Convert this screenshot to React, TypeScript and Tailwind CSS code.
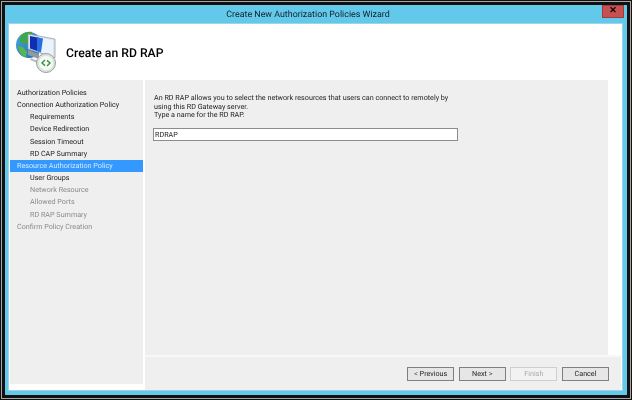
function Icon() {
  return (
    <svg width="42" height="42" viewBox="0 0 42 42" className="shrink-0">
      <defs>
        <linearGradient id="glb" x1="0" y1="0" x2="1" y2="1">
          <stop offset="0" stopColor="#4aa8de" />
          <stop offset="1" stopColor="#1769ad" />
        </linearGradient>
      </defs>
      <circle cx="13" cy="14" r="13" fill="url(#glb)" />
      <path d="M5 4c3-3 8-4 11-3l1 4-4 3-2 5-5-1-3-3z" fill="#3fa64a" />
      <path d="M2 15l5 1 4 5-1 5c-5-1-7-5-8-11z" fill="#5ab54c" />
      <path d="M12 3l27 5 0 19-27-9z" fill="#dfe4ea" stroke="#8b97a8" strokeWidth="0.7" />
      <path d="M14 5l23 4.2 0 16-23-8z" fill="#eaf3fb" />
      <path d="M14 5l9 1.7 0 14-9-3.2z" fill="#0f2fb0" />
      <path d="M21 6.3l6 1.2-2 14-4-1.4z" fill="#2a6fe0" />
      <path d="M12 19l11 4 0 5-11-4z" fill="#8f98a3" />
      <path d="M15 27l7 3-1 2-7-3z" fill="#b9bfc6" />
      <circle cx="30" cy="32" r="9.5" fill="#dfe3df" stroke="#98a29c" strokeWidth="1" />
      <circle cx="30" cy="32" r="7" fill="#f8f9f6" />
      <path d="M29 29l-3 3 3 2.6" fill="none" stroke="#2f9a3c" strokeWidth="1.4" />
      <path d="M31 29.4l3 2.6-3 3" fill="none" stroke="#2f9a3c" strokeWidth="1.4" />
    </svg>
  );
}

const rows: { label: string; indent?: boolean; active?: boolean; dim?: boolean }[] = [
  { label: "Authorization Policies" },
  { label: "Connection Authorization Policy" },
  { label: "Requirements", indent: true },
  { label: "Device Redirection", indent: true },
  { label: "Session Timeout", indent: true },
  { label: "RD CAP Summary", indent: true },
  { label: "Resource Authorization Policy", active: true },
  { label: "User Groups", indent: true },
  { label: "Network Resource", indent: true, dim: true },
  { label: "Allowed Ports", indent: true, dim: true },
  { label: "RD RAP Summary", indent: true, dim: true },
  { label: "Confirm Policy Creation", dim: true },
];

function Btn({ children, disabled }: { children: string; disabled?: boolean }) {
  return (
    <div
      className={
        disabled
          ? "w-[47px] h-[14px] flex items-center justify-center border border-[#cfcfcf] bg-[#f2f2f2] text-[#a8a8a8]"
          : "w-[47px] h-[14px] flex items-center justify-center border border-[#7f7f7f] bg-[#e6e6e6] text-[#222]"
      }
    >
      {children}
    </div>
  );
}

export default function App() {
  return (
    <div className="w-[632px] h-[400px] bg-[#111] p-[1px] font-['Roboto',sans-serif] [text-rendering:geometricPrecision] text-[7.2px] leading-[10px] text-[#222] overflow-hidden blur-[0.3px]">
      <div className="w-full h-full border border-[#a8a8a8] bg-[#111] p-[3px]">
        <div className="w-full h-full bg-[#63c9ea] flex flex-col">
          <div className="h-[19px] shrink-0 relative">
            <div className="text-center text-[8.9px] leading-[20px] text-[#14202a] pr-[16px]">
              Create New Authorization Policies Wizard
            </div>
            <div className="absolute right-[3px] top-0 w-[22px] h-[13px] bg-[#c75050] border border-[#9b3d3d] flex items-center justify-center text-black text-[9px] font-bold leading-none">
              ✕
            </div>
          </div>
          <div className="flex-1 min-h-0 ml-[4px] mb-[5px] mr-[5px] bg-white flex flex-col outline outline-[#9fd4e8]">
            <div className="h-[56px] shrink-0 flex items-center gap-[8px] pl-[7px]">
              <Icon />
              <div className="text-[12.2px] font-medium text-black pt-[1px]">Create an RD RAP</div>
            </div>
            <div className="flex-1 min-h-0 flex">
              <div className="w-[133px] ml-[1px] shrink-0 flex flex-col mr-[2px]">
                <div className="flex-1 bg-[#efefef] pt-[6.8px]">
                  {rows.map((r) => (
                    <div
                      key={r.label}
                      className={
                        "h-[12.2px] leading-[12.6px] whitespace-nowrap " +
                        (r.indent ? "pl-[20px] " : "pl-[7px] ") +
                        (r.active ? "bg-[#3399ff] text-[#d6e9ff] " : r.dim ? "text-[#8a8a8a] " : "text-[#222] ")
                      }
                    >
                      {r.label}
                    </div>
                  ))}
                </div>
                <div className="h-[6px] shrink-0 bg-white" />
              </div>
              <div className="flex-1 min-w-0 flex flex-col">
                <div className="flex-1 min-h-0 mr-[14px] bg-[#efefef] pt-[14px] pl-[8px]">
                  <p className="w-[310px] leading-[8.5px] text-[#222] whitespace-nowrap pl-[1px]">
                    An RD RAP allows you to select the network resources that users can connect to remotely by
                    <br />
                    using this RD Gateway server.
                    <br />
                    Type a name for the RD RAP.
                  </p>
                  <div className="mt-[8.5px] w-[305px] h-[13px] bg-white border border-[#8c8c8c] pl-[1px] leading-[11px]">
                    RDRAP
                  </div>
                </div>
                <div className="h-[2px] shrink-0 bg-[#f8f8f8]" />
                <div className="h-[33px] shrink-0 bg-[#efefef] mr-[1px] flex items-start justify-end gap-[4.6px] pt-[10px] pr-[12px]">
                  <Btn>{"< Previous"}</Btn>
                  <Btn>{"Next >"}</Btn>
                  <Btn disabled>Finish</Btn>
                  <Btn>Cancel</Btn>
                </div>
              </div>
            </div>
          </div>
        </div>
      </div>
    </div>
  );
}
